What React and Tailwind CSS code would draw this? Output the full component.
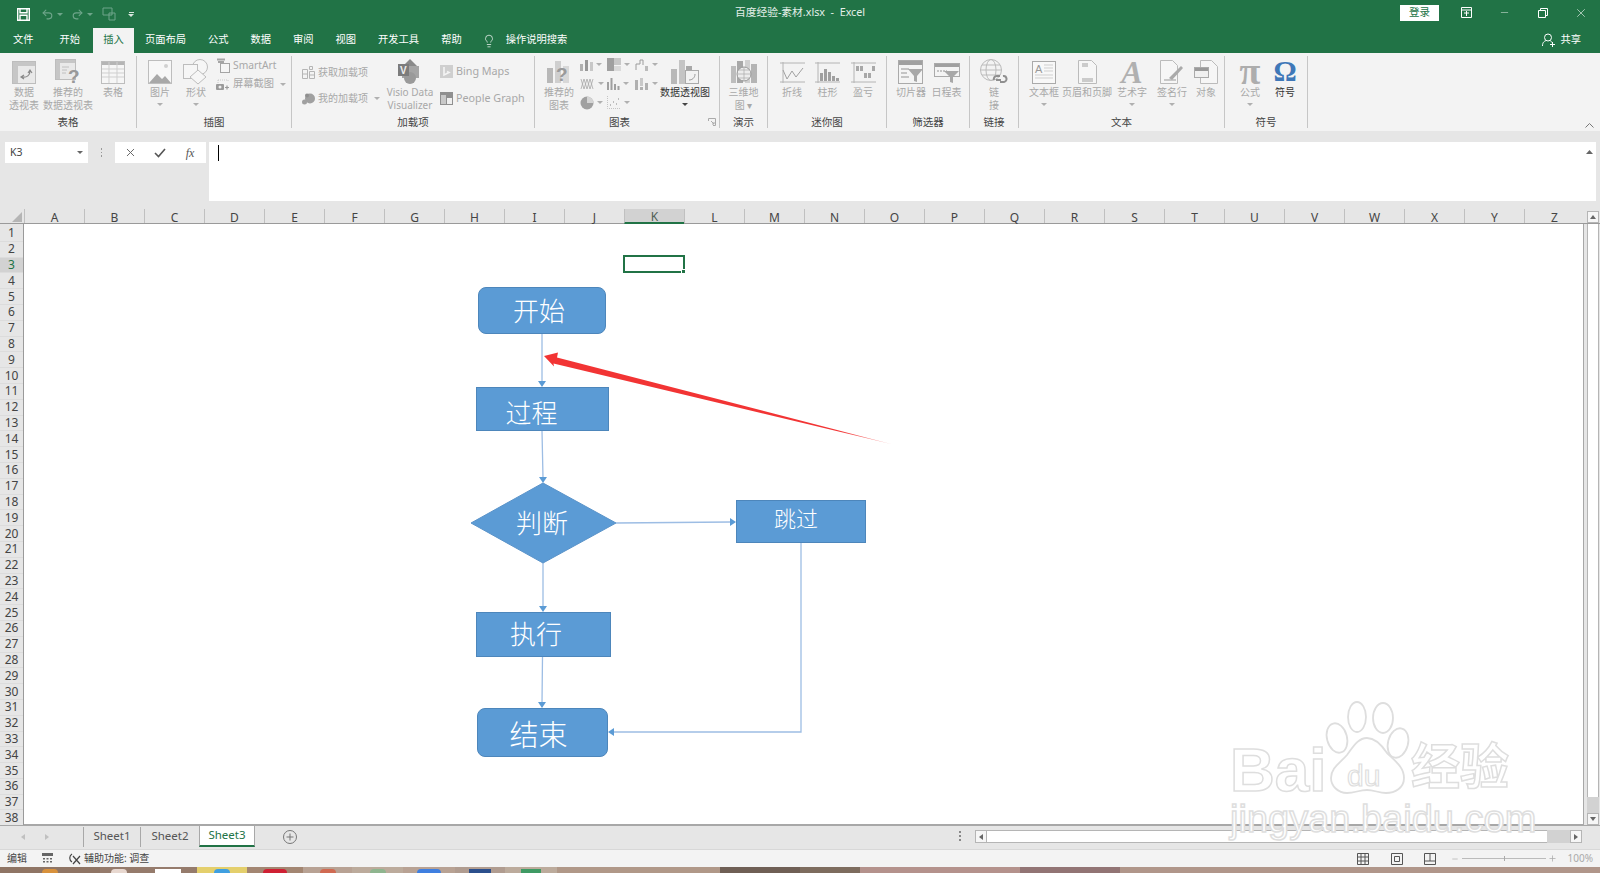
import React from "react";
import { Lightbulb, Minus, Plus, Redo2, Undo2, X } from "lucide-react";

const tabs = ["页面布局", "公式", "数据", "审阅", "视图", "开发工具", "帮助"];
const cols = "ABCDEFGHIJKLMNOPQRSTUVWXYZ".split("");
const rows = Array.from({ length: 38 }, (_, i) => i + 1);

const Caret = ({ color = "border-t-[#b0b0b0]" }) => (
  <span className={`inline-block w-0 h-0 border-x-[3px] border-x-transparent border-t-[3px] ${color}`} />
);

function LargeBtn({ w, icon, lines, caret, dark }) {
  return (
    <div className={`flex flex-col items-center shrink-0 ${w}`}>
      <div className="h-[28px] flex items-center justify-center">{icon}</div>
      <div className={`flex flex-col items-center text-[10px] leading-[12.500px] whitespace-nowrap ${dark ? "text-[#333]" : "text-[#a8a8a8]"}`}>
        {lines.map((l) => (
          <span key={l}>{l}</span>
        ))}
        {caret && (
          <span className="h-[12px] flex items-center">
            <Caret color={dark ? "border-t-[#444]" : "border-t-[#b0b0b0]"} />
          </span>
        )}
      </div>
    </div>
  );
}

function Group({ w, label, children, className = "", labelClass = "" }) {
  return (
    <div className={`relative shrink-0 my-[3px] flex flex-col border-r border-[#c6c6c6] ${w}`}>
      <div className={`flex-1 pt-[2px] flex ${className}`}>{children}</div>
      <div className={`h-[13px] pt-[2px] flex items-center justify-center text-[10.5px] text-[#444] ${labelClass}`}>{label}</div>
    </div>
  );
}

function SmallRow({ icon, text, caret, className = "" }) {
  return (
    <div className={`flex items-center gap-[3px] text-[#a8a8a8] whitespace-nowrap ${className}`}>
      {icon}
      <span>{text}</span>
      {caret && <span className="ml-[3px] flex"><Caret /></span>}
    </div>
  );
}

const g = "#bdbdbd";
const lg = "#e9e9e9";

const PivotIcon = () => (
  <svg width="24" height="23" viewBox="0 0 24 23">
    <rect x=".5" y=".5" width="23" height="22" fill={lg} stroke={g} />
    <rect x="1" y="1" width="22" height="4" fill="#c6c6c6" />
    <rect x="1" y="1" width="5" height="21" fill="#c6c6c6" />
    <path d="M10 16c5 1 8-2 8-6M16 12l2-3 2 3M12 14l-3 2 3 2" fill="none" stroke="#888" strokeWidth="1.2" />
  </svg>
);
const RecPivotIcon = () => (
  <svg width="26" height="27" viewBox="0 0 26 27">
    <rect x=".5" y=".5" width="20" height="20" fill={lg} stroke={g} />
    <rect x="1" y="1" width="19" height="3" fill="#c6c6c6" />
    <rect x="1" y="1" width="4" height="19" fill="#c6c6c6" />
    <path d="M7 8h7M7 11h5M7 14h4" stroke="#c0c0c0" />
    <text x="13" y="24" fontSize="19" fontWeight="700" fill="#999" fontFamily="Liberation Sans">?</text>
  </svg>
);
const TableIcon = () => (
  <svg width="24" height="23" viewBox="0 0 24 23">
    <rect x=".5" y=".5" width="23" height="22" fill="#f6f6f6" stroke={g} />
    <rect x="1" y="1" width="22" height="3" fill="#b5b5b5" />
    <path d="M1 8h22M1 12h22M1 16h22M8 1v21M16 1v21" stroke="#cfcfcf" />
  </svg>
);
const PictureIcon = () => (
  <svg width="24" height="24" viewBox="0 0 24 24">
    <rect x=".5" y=".5" width="23" height="23" fill="#f7f7f7" stroke={g} />
    <circle cx="18" cy="6" r="2" fill="#d0d0d0" />
    <path d="M1 23l8-9 5 5 3-3 6 7z" fill="#a8a8a8" />
  </svg>
);
const ShapesIcon = () => (
  <svg width="26" height="26" viewBox="0 0 26 26" fill="#f6f6f6" stroke={g}>
    <circle cx="17" cy="8" r="7.5" />
    <rect x=".5" y="5.5" width="14" height="14" />
    <path d="M15 11l8 7-8 7-8-7z" />
  </svg>
);
const SmartArtIcon = () => (
  <svg width="14" height="15" viewBox="0 0 14 15" fill="none" stroke="#a5a5a5">
    <rect x="4.5" y="5.5" width="9" height="9" fill="#f6f6f6" />
    <path d="M1 1.5h8M2 4h6" strokeWidth="2" />
  </svg>
);
const ScreenshotIcon = () => (
  <svg width="14" height="14" viewBox="0 0 14 14">
    <path d="M2 3h10M2 3v3M12 3v2" stroke="#c8c8c8" strokeDasharray="1 1" fill="none" />
    <rect x="0" y="7" width="8" height="6" rx="1" fill="#9a9a9a" />
    <circle cx="4" cy="10" r="1.5" fill="#eee" />
    <path d="M9 10.5h4M11 8.5v4" stroke="#9a9a9a" strokeWidth="1.2" />
  </svg>
);
const GetAddinIcon = () => (
  <svg width="13" height="13" viewBox="0 0 13 13" fill="none" stroke="#b5b5b5">
    <path d="M.5 3.5h5v9h-5zM.5 8h5M7.5 5.5h5v7h-5zM7.5 9h5M7.5 .5h3v3h-3z" />
  </svg>
);
const MyAddinIcon = () => (
  <svg width="13" height="12" viewBox="0 0 13 12" fill="#a0a0a0">
    <circle cx="8" cy="5.5" r="5" />
    <circle cx="2.5" cy="9" r="2.5" />
    <circle cx="5" cy="2.5" r="2" fill="#8f8f8f" />
  </svg>
);
const VisioIcon = () => (
  <svg width="26" height="26" viewBox="0 0 26 26">
    <path d="M13 0l8 8H5z" fill="#8a8a8a" />
    <rect x="5" y="7" width="17" height="12" fill="#a5a5a5" />
    <circle cx="13" cy="19" r="6" fill="#9a9a9a" />
    <rect x="1" y="5" width="11" height="12" fill="#7c7c7c" />
    <text x="3" y="15" fontSize="10" fontWeight="700" fill="#eee" fontFamily="Liberation Sans">V</text>
  </svg>
);
const BingIcon = () => (
  <svg width="13" height="13" viewBox="0 0 13 13">
    <rect width="13" height="13" fill="#cfcfcf" />
    <path d="M4 2v8l5-2.5-2-1" fill="none" stroke="#f4f4f4" strokeWidth="1.6" />
  </svg>
);
const PeopleIcon = () => (
  <svg width="13" height="13" viewBox="0 0 13 13">
    <rect width="13" height="13" fill="#8f8f8f" />
    <rect x="1" y="3" width="5" height="9" fill="#c8c8c8" />
    <rect x="7" y="6" width="5" height="6" fill="#eee" />
  </svg>
);
const RecChartIcon = () => (
  <svg width="24" height="24" viewBox="0 0 24 24">
    <rect x="0" y="8" width="6" height="15" fill="#b8b8b8" />
    <rect x="8" y="1" width="6" height="22" fill="#cfcfcf" />
    <rect x="16" y="6" width="6" height="17" fill="#d8d8d8" />
    <text x="9" y="21" fontSize="19" fontWeight="700" fill="#9a9a9a" fontFamily="Liberation Sans">?</text>
  </svg>
);
const MiniBars = () => (
  <svg width="13" height="12" viewBox="0 0 13 12" fill="#b0b0b0">
    <rect x="0" y="5" width="3" height="7" />
    <rect x="5" y="1" width="3" height="11" fill="#989898" />
    <rect x="10" y="3" width="3" height="9" fill="#c8c8c8" />
  </svg>
);
const MiniTree = () => (
  <svg width="14" height="13" viewBox="0 0 14 13">
    <rect width="7" height="13" fill="#a0a0a0" />
    <rect x="7" width="7" height="7" fill="#c8c8c8" />
    <rect x="7" y="8" width="7" height="5" fill="#dadada" />
  </svg>
);
const MiniStep = () => (
  <svg width="14" height="12" viewBox="0 0 14 12" fill="none" stroke="#9c9c9c">
    <path d="M1 11V5h4V1h3v5" />
    <rect x="10" y="7" width="3" height="5" fill="#bbb" stroke="none" />
  </svg>
);
const MiniWave = () => (
  <svg width="15" height="13" viewBox="0 0 15 13" fill="none" stroke="#a8a8a8">
    <path d="M1 12l3-10 3 10 3-10 3 10M1 2l3 10 3-10 3 10 3-10" strokeWidth=".8" />
  </svg>
);
const MiniHist = () => (
  <svg width="13" height="12" viewBox="0 0 13 12" fill="#a0a0a0">
    <rect x="0" y="4" width="2" height="8" />
    <rect x="3.5" y="0" width="2" height="12" />
    <rect x="7" y="6" width="2" height="6" />
    <rect x="10.5" y="8" width="2" height="4" />
  </svg>
);
const MiniBox = () => (
  <svg width="14" height="12" viewBox="0 0 14 12" fill="#b0b0b0">
    <rect x="0" y="2" width="3" height="10" />
    <rect x="5" y="0" width="3" height="8" fill="#c8c8c8" />
    <rect x="5" y="9" width="3" height="3" />
    <rect x="10" y="5" width="3" height="7" />
  </svg>
);
const MiniPie = () => (
  <svg width="14" height="14" viewBox="0 0 14 14">
    <circle cx="7" cy="7" r="6.5" fill="#a0a0a0" />
    <path d="M7 7V.5A6.5 6.5 0 0 1 13.5 7z" fill="#d4d4d4" />
  </svg>
);
const MiniScatter = () => (
  <svg width="14" height="13" viewBox="0 0 14 13" fill="none">
    <path d="M.5 0v12.5H14" stroke="#c4c4c4" strokeDasharray="1 1" />
    <path d="M3 9h1M6 6h1M9 8h1M11 3h1" stroke="#aaa" strokeWidth="1.5" />
  </svg>
);
const PivotChartIcon = () => (
  <svg width="28" height="25" viewBox="0 0 28 25">
    <rect x="0" y="9" width="6" height="15" fill="#b8b8b8" />
    <rect x="8" y="0" width="6" height="24" fill="#c4c4c4" />
    <rect x="15" y="6" width="6" height="18" fill="#a8a8a8" />
    <rect x="14.5" y="10.5" width="13" height="13" fill="#f2f2f2" stroke="#aaa" />
    <path d="M18 20c3 0 6-2 6-6" stroke="#999" fill="none" />
  </svg>
);
const MapIcon = () => (
  <svg width="26" height="24" viewBox="0 0 26 24">
    <rect x="0" y="6" width="5" height="17" fill="#bdbdbd" />
    <rect x="6" y="1" width="6" height="22" fill="#a8a8a8" />
    <rect x="14" y="0" width="5" height="23" fill="#d0d0d0" />
    <rect x="20" y="4" width="6" height="19" fill="#b4b4b4" />
    <circle cx="13" cy="14" r="7" fill="#ececec" stroke="#999" />
    <path d="M6 14h14M13 7v14M8 10h10M8 18h10" stroke="#aaa" strokeWidth=".7" />
  </svg>
);
const LineSpark = () => (
  <svg width="25" height="21" viewBox="0 0 25 21" fill="none">
    <path d="M0 1h25M0 20h25M3 0v21" stroke="#b4b4b4" />
    <path d="M3 8l4 9 5-8 4 6 7-9" stroke="#a0a0a0" />
  </svg>
);
const ColSpark = () => (
  <svg width="25" height="21" viewBox="0 0 25 21">
    <path d="M0 1h25M0 20h25M3 0v21" stroke="#b4b4b4" fill="none" />
    <rect x="5" y="11" width="3" height="8" fill="#a0a0a0" />
    <rect x="9" y="7" width="3" height="12" fill="#a0a0a0" />
    <rect x="13" y="10" width="3" height="9" fill="#a0a0a0" />
    <rect x="17" y="14" width="3" height="5" fill="#a0a0a0" />
    <rect x="21" y="16" width="3" height="3" fill="#a0a0a0" />
  </svg>
);
const WinSpark = () => (
  <svg width="25" height="21" viewBox="0 0 25 21">
    <path d="M0 1h25M0 20h25M3 0v21" stroke="#b4b4b4" fill="none" />
    <rect x="5" y="4" width="3" height="5" fill="#a8a8a8" />
    <rect x="9" y="4" width="3" height="5" fill="#a8a8a8" />
    <rect x="13" y="11" width="3" height="5" fill="#a8a8a8" />
    <rect x="17" y="11" width="3" height="5" fill="#a8a8a8" />
    <rect x="21" y="4" width="3" height="5" fill="#a8a8a8" />
  </svg>
);
const SlicerIcon = () => (
  <svg width="26" height="24" viewBox="0 0 26 24">
    <rect x=".5" y=".5" width="24" height="23" fill="#f4f4f4" stroke="#aaa" />
    <rect x="1" y="1" width="23" height="4" fill="#a0a0a0" />
    <path d="M3 9h8M3 13h6M3 17h8" stroke="#c4c4c4" strokeWidth="2" />
    <path d="M10 9h15l-6 7v6l-3-1v-5z" fill="#a8a8a8" />
  </svg>
);
const TimelineIcon = () => (
  <svg width="26" height="24" viewBox="0 0 26 24">
    <rect x=".5" y="3.5" width="25" height="13" fill="#f4f4f4" stroke="#aaa" />
    <rect x="1" y="4" width="24" height="3" fill="#a0a0a0" />
    <path d="M3 11h10" stroke="#c4c4c4" strokeWidth="2" strokeDasharray="2 1" />
    <path d="M10 11h15l-6 6v6l-3-1v-5z" fill="#a8a8a8" />
  </svg>
);
const LinkIcon = () => (
  <svg width="28" height="26" viewBox="0 0 28 26" fill="none">
    <circle cx="11" cy="11" r="10.5" stroke="#bbb" />
    <ellipse cx="11" cy="11" rx="5" ry="10.5" stroke="#bbb" />
    <path d="M.5 11h21M2 6h18M2 16h18" stroke="#bbb" />
    <path d="M14 21a3 3 0 0 1 3-4h3M23 17a3 3 0 0 1 1 6h-4M16 21h5" stroke="#8f8f8f" strokeWidth="2" />
  </svg>
);
const TextBoxIcon = () => (
  <svg width="24" height="23" viewBox="0 0 24 23">
    <rect x=".5" y=".5" width="23" height="22" fill="#f8f8f8" stroke="#aaa" />
    <text x="3" y="12" fontSize="11" fill="#999" fontFamily="Liberation Sans">A</text>
    <path d="M12 4h9M12 7h9M12 10h9M3 14h18M3 17h18" stroke="#cfcfcf" />
  </svg>
);
const HeaderIcon = () => (
  <svg width="19" height="24" viewBox="0 0 19 24">
    <path d="M.5.5h13l5 5v18H.5z" fill="#f6f6f6" stroke="#bbb" />
    <path d="M4 4h6M4 6h6M4 19h11M4 21h11" stroke="#bdbdbd" strokeWidth="1.5" />
  </svg>
);
const WordArtIcon = () => (
  <span className="inline-block h-[26px] font-['Liberation_Serif',serif] italic font-bold text-[32px] leading-[26px] text-[#b0b0b0]">A</span>
);
const SignatureIcon = () => (
  <svg width="24" height="24" viewBox="0 0 24 24">
    <path d="M.5.5h12l5 5v18H.5z" fill="#f6f6f6" stroke="#bbb" />
    <path d="M4 20h12" stroke="#999" />
    <path d="M9 18l12-12 2 2-11 12z" fill="#aaa" />
  </svg>
);
const ObjectIcon = () => (
  <svg width="24" height="24" viewBox="0 0 24 24">
    <path d="M6.5.5h11l6 6v17h-17z" fill="#f6f6f6" stroke="#bbb" />
    <rect x=".5" y="7.5" width="14" height="10" fill="#f0f0f0" stroke="#aaa" />
    <rect x="1" y="8" width="13" height="3" fill="#999" />
  </svg>
);
const Glyph = ({ children, className }) => (
  <span className={`inline-block h-[26px] leading-[24px] font-['Liberation_Serif',serif] font-bold ${className}`}>{children}</span>
);

function Chip({ w, bg, color, chip = "w-[16px] rounded-t-full" }) {
  return (
    <div className={`shrink-0 h-full flex items-end justify-center ${w} ${bg}`}>
      {color && <div className={`h-[4px] ${chip} ${color}`} />}
    </div>
  );
}

function Arrow({ points }) {
  return <polygon points={points} fill="#5b9bd5" />;
}

export default function App() {
  return (
    <div className="relative w-[1600px] h-[873px] overflow-hidden flex flex-col bg-[#e6e6e6] font-['Noto_Sans','Noto_Sans_CJK_SC',sans-serif]">
      {/* title bar */}
      <div className="h-[28px] bg-[#217346] grid grid-cols-[1fr_auto_1fr] items-center text-white shrink-0">
        <div className="flex items-center pl-[17px]">
          <svg width="13" height="13" viewBox="0 0 13 13" fill="none" stroke="#fff" strokeWidth="1.4">
            <path d="M.7.7h11.6v11.6H.7zM3 .7v4h7v-4M3 12.300v-5h7v5" />
          </svg>
          <Undo2 size={13} className="ml-[11px] text-[#6ea58a]" />
          <span className="ml-[3px] flex"><Caret color="border-t-[#6ea58a]" /></span>
          <Redo2 size={13} className="ml-[8px] text-[#6ea58a]" />
          <span className="ml-[3px] flex"><Caret color="border-t-[#6ea58a]" /></span>
          <svg className="ml-[9px]" width="14" height="14" viewBox="0 0 14 14" fill="none" stroke="#6ea58a">
            <path d="M1 1h9v7H1zM7 6h6v7H7z" />
          </svg>
          <div className="ml-[12px] flex flex-col items-center gap-[1px]">
            <span className="w-[5px] h-[1px] bg-[#d8e6de]" />
            <Caret color="border-t-[#d8e6de]" />
          </div>
        </div>
        <div className="text-[10.75px] whitespace-pre text-[#e4efe9] pb-[4px]">百度经验-素材.xlsx  -  Excel</div>
        <div className="flex items-center justify-end h-full pb-[3px]">
          <div className="w-[39px] h-[16px] mr-[8px] bg-white text-[#217346] text-[10.5px] flex items-center justify-center">登录</div>
          <div className="w-[38px] flex justify-center">
            <svg width="11" height="11" viewBox="0 0 11 11" fill="none" stroke="#fff">
              <path d="M.5.5h10v10H.5zM.5 3h10M3 6h5M5.500 4v5" />
            </svg>
          </div>
          <div className="w-[39px] flex justify-center"><Minus size={11} strokeWidth={1} /></div>
          <div className="w-[38px] flex justify-center">
            <svg width="10" height="10" viewBox="0 0 10 10" fill="none" stroke="#fff">
              <path d="M.5 2.500h7v7h-7zM2.500 2.500v-2h7v7h-2" />
            </svg>
          </div>
          <div className="w-[38px] flex justify-center"><X size={14} strokeWidth={1} /></div>
        </div>
      </div>

      {/* tabs */}
      <div className="h-[25px] bg-[#217346] flex items-center text-white text-[10.25px] shrink-0">
        <div className="px-[13px] h-full flex items-center pb-[2px]">文件</div>
        <div className="px-[13px] h-full flex items-center pb-[2px]">开始</div>
        <div className="w-[41px] h-full bg-[#f3f3f3] text-[#217346] flex items-center justify-center pb-[2px]">插入</div>
        {tabs.map((t) => (
          <div key={t} className="px-[11px] h-full flex items-center pb-[2px]">{t}</div>
        ))}
        <Lightbulb size={14} strokeWidth={1.2} className="ml-[9px]" />
        <div className="ml-[10px] pb-[2px]">操作说明搜索</div>
        <div className="flex-1" />
        <svg className="mb-[2px]" width="14" height="14" viewBox="0 0 14 14" fill="none" stroke="#fff">
          <circle cx="6" cy="4.500" r="3.500" />
          <path d="M.5 13c0-4 2-5 4-5.500M7.500 7.500c1 .3 2 .8 2.500 2M8 11.500h5M10.500 9v5" />
        </svg>
        <div className="ml-[4px] mr-[19px] pb-[2px]">共享</div>
      </div>

      {/* ribbon */}
      <div className="relative h-[78px] bg-[#f3f3f3] flex shrink-0">
        <Group w="w-[137px]" label="表格" className="pl-[2px]">
          <LargeBtn w="w-[44px]" icon={<PivotIcon />} lines={["数据", "透视表"]} />
          <LargeBtn w="w-[44px]" icon={<RecPivotIcon />} lines={["推荐的", "数据透视表"]} />
          <LargeBtn w="w-[46px]" icon={<TableIcon />} lines={["表格"]} />
        </Group>
        <Group w="w-[155px]" label="插图" className="pl-[5px]">
          <LargeBtn w="w-[36px]" icon={<PictureIcon />} lines={["图片"]} caret />
          <LargeBtn w="w-[36px]" icon={<ShapesIcon />} lines={["形状"]} caret />
          <div className="ml-[2px] flex flex-col gap-[3px] text-[10.25px]">
            <SmallRow icon={<SmartArtIcon />} text="SmartArt" />
            <SmallRow icon={<ScreenshotIcon />} text="屏幕截图" caret />
          </div>
        </Group>
        <Group w="w-[243px]" label="加载项" className="pl-[10px]">
          <div className="w-[83px] pt-[7px] flex flex-col gap-[11px] text-[10px]">
            <SmallRow icon={<GetAddinIcon />} text="获取加载项" />
            <SmallRow icon={<MyAddinIcon />} text="我的加载项" caret />
          </div>
          <LargeBtn w="w-[50px]" icon={<VisioIcon />} lines={["Visio Data", "Visualizer"]} />
          <div className="pl-[5px] pt-[6px] flex flex-col gap-[13px] text-[10.75px] leading-[14px]">
            <SmallRow icon={<BingIcon />} text="Bing Maps" />
            <SmallRow icon={<PeopleIcon />} text="People Graph" />
          </div>
        </Group>
        <Group w="w-[185px]" label="图表" className="pl-[4px]" labelClass="pr-[15px]">
          <LargeBtn w="w-[40px]" icon={<RecChartIcon />} lines={["推荐的", "图表"]} />
          <div className="ml-[1px] w-[81px] shrink-0 grid grid-cols-[27px_28px_26px] gap-y-[6px] content-start">
            {[
              <MiniBars key="a" />, <MiniTree key="b" />, <MiniStep key="c" />,
              <MiniWave key="d" />, <MiniHist key="e" />, <MiniBox key="f" />,
              <MiniPie key="g" />, <MiniScatter key="h" />,
            ].map((ic) => (
              <div key={ic.key} className="flex items-center gap-[3px] h-[13px]">
                {ic}
                <Caret />
              </div>
            ))}
          </div>
          <LargeBtn w="w-[48px]" icon={<PivotChartIcon />} lines={["数据透视图"]} caret dark />
          <svg className="absolute right-[3px] bottom-[2px]" width="8" height="8" viewBox="0 0 8 8" fill="none" stroke="#aaa">
            <path d="M.5 3V.5H7.500V7.500H5M3 3l3 3M6 4v2H4" />
          </svg>
        </Group>
        <Group w="w-[48px]" label="演示">
          <LargeBtn w="w-[47px]" icon={<MapIcon />} lines={["三维地", "图 ▾"]} />
        </Group>
        <Group w="w-[119px]" label="迷你图" className="pl-[6px]">
          <LargeBtn w="w-[36px]" icon={<LineSpark />} lines={["折线"]} />
          <LargeBtn w="w-[35px]" icon={<ColSpark />} lines={["柱形"]} />
          <LargeBtn w="w-[36px]" icon={<WinSpark />} lines={["盈亏"]} />
        </Group>
        <Group w="w-[83px]" label="筛选器" className="pl-[6px]">
          <LargeBtn w="w-[36px]" icon={<SlicerIcon />} lines={["切片器"]} />
          <LargeBtn w="w-[35px]" icon={<TimelineIcon />} lines={["日程表"]} />
        </Group>
        <Group w="w-[49px]" label="链接">
          <LargeBtn w="w-[48px]" icon={<LinkIcon />} lines={["链", "接"]} />
        </Group>
        <Group w="w-[206px]" label="文本" className="pl-[5px]">
          <LargeBtn w="w-[40px]" icon={<TextBoxIcon />} lines={["文本框"]} caret />
          <LargeBtn w="w-[46px]" icon={<HeaderIcon />} lines={["页眉和页脚"]} />
          <LargeBtn w="w-[44px]" icon={<WordArtIcon />} lines={["艺术字"]} caret />
          <LargeBtn w="w-[36px]" icon={<SignatureIcon />} lines={["签名行"]} caret />
          <LargeBtn w="w-[32px]" icon={<ObjectIcon />} lines={["对象"]} />
        </Group>
        <Group w="w-[83px]" label="符号" className="pl-[8px]">
          <LargeBtn w="w-[34px]" icon={<Glyph className="text-[38px] text-[#adadad]">π</Glyph>} lines={["公式"]} caret />
          <LargeBtn w="w-[36px]" icon={<Glyph className="text-[29px] text-[#3f78b8]">Ω</Glyph>} lines={["符号"]} dark />
        </Group>
        <svg className="absolute right-[6px] bottom-[3px]" width="9" height="5" viewBox="0 0 9 5" fill="none" stroke="#777">
          <path d="M.5 4.500l4-4 4 4" />
        </svg>
      </div>

      {/* formula bar */}
      <div className="h-[78px] shrink-0 bg-[#e6e6e6] flex items-start pt-[11px] pl-[5px] pr-[4px] text-[#444]">
        <div className="w-[83px] h-[21px] bg-white flex items-center justify-between pl-[5px] pr-[5px] text-[10.5px]">
          <span>K3</span>
          <Caret color="border-t-[#666]" />
        </div>
        <div className="w-[27px] h-[21px] flex flex-col items-center justify-center gap-[2px]">
          <span className="w-[1.5px] h-[1.5px] bg-[#999]" />
          <span className="w-[1.5px] h-[1.5px] bg-[#999]" />
          <span className="w-[1.5px] h-[1.5px] bg-[#999]" />
        </div>
        <div className="w-[91px] h-[21px] bg-white flex items-center">
          <div className="w-[30px] flex justify-center"><X size={13} strokeWidth={1.8} className="text-[#666]" /></div>
          <div className="w-[30px] flex justify-center">
            <svg width="12" height="10" viewBox="0 0 12 10" fill="none" stroke="#555" strokeWidth="1.6">
              <path d="M1 5l3.500 3.500L11 1" />
            </svg>
          </div>
          <div className="w-[30px] flex justify-center font-['Liberation_Serif',serif] italic text-[12px] text-[#555]">fx</div>
        </div>
        <div className="relative ml-[3px] flex-1 h-[59px] bg-white">
          <div className="absolute left-[9px] top-[3px] w-[1px] h-[16px] bg-black" />
          <svg className="absolute right-[3px] top-[8px]" width="7" height="4" viewBox="0 0 7 4" fill="#666">
            <path d="M3.500 0L7 4H0z" />
          </svg>
        </div>
      </div>

      {/* column headers */}
      <div className="h-[15px] shrink-0 flex text-[12px] leading-[14px] text-[#444] border-b border-[#9a9a9a]">
        <div className="w-[24px] shrink-0 flex items-end justify-end pr-[2px] pb-[1px]">
          <div className="w-0 h-0 border-l-[10px] border-l-transparent border-b-[10px] border-b-[#b5b5b5]" />
        </div>
        {cols.map((c) => (
          <div
            key={c}
            className={`w-[60px] shrink-0 flex items-center justify-center pt-[3px] border-l border-[#c0c0c0] ${
              c === "K" ? "bg-[#d2d2d2] border-b-2 border-b-[#217346] text-[#4f5f56] h-[15px]" : ""
            }`}
          >
            {c}
          </div>
        ))}
        <div className="flex-1 flex justify-center pl-[2px]">
          <div className="w-[12px] h-[12px] mt-[2px] bg-[#f6f6f6] border border-[#b5b5b5] flex items-center justify-center">
            <svg width="6" height="4" viewBox="0 0 6 4" fill="#666"><path d="M3 0l3 4H0z" /></svg>
          </div>
        </div>
      </div>

      {/* grid */}
      <div className="h-[601px] shrink-0 flex">
        <div className="w-[24px] shrink-0 border-r border-[#9a9a9a] pt-[2px] overflow-hidden">
          {rows.map((r) => (
            <div
              key={r}
              className={`h-[15.800px] flex items-center justify-center text-[12px] text-[#444] border-b border-[#dcdcdc] ${
                r === 3 ? "bg-[#d2d2d2] text-[#217346]" : ""
              }`}
            >
              {r}
            </div>
          ))}
        </div>
        <div className="relative w-[1560px] shrink-0 bg-white border-r border-[#a8a8a8] border-b">
          <svg className="absolute left-0 top-0" width="1560" height="601" viewBox="24 224 1560 601" fill="none">
            <g stroke="#9dbde4" strokeWidth="1.300">
              <path d="M542 334V382M542 431L543 478M543 563V607M542.500 657L542 703M616 523L731 522M801 543V732H613" />
            </g>
            <Arrow points="538,381 546,381 542,387" />
            <Arrow points="539,477 547,477 543,483" />
            <Arrow points="539,606 547,606 543,612" />
            <Arrow points="538,702 546,702 542,708" />
            <Arrow points="730,518 736,522 730,526" />
            <Arrow points="614,728 608,732 614,736" />
            <polygon points="543,483 616,523 543,563 471,523" fill="#5b9bd5" stroke="#5a93c9" />
            <defs>
              <linearGradient id="red" x1="544" y1="356" x2="891" y2="444" gradientUnits="userSpaceOnUse">
                <stop offset="0" stopColor="#f23434" />
                <stop offset="0.85" stopColor="#f23434" />
                <stop offset="1" stopColor="#f7a0a0" />
              </linearGradient>
            </defs>
            <polygon points="544,356 558,352.500 557,357.500 891,444 553.500,363.500 554,366.500" fill="url(#red)" />
          </svg>

          <div className="absolute left-[599px] top-[31px] w-[62px] h-[18px] border-2 border-[#217346]">
            <div className="absolute -right-[3px] -bottom-[3px] w-[5px] h-[5px] bg-[#217346] border border-white" />
          </div>

          <div className="absolute left-[454px] top-[63px] w-[128px] h-[47px] rounded-[8px] bg-[#5b9bd5] border border-[#4d86bb] text-white text-[26px] font-light flex items-center justify-center pr-[6px] pt-[2px]">开始</div>
          <div className="absolute left-[452px] top-[163px] w-[133px] h-[44px] bg-[#5b9bd5] border border-[#4d86bb] text-white text-[26px] font-light flex items-center justify-center pr-[22px] pt-[8px]">过程</div>
          <div className="absolute left-[483px] top-[279px] w-[70px] h-[40px] text-white text-[26px] font-light flex items-center justify-center">判断</div>
          <div className="absolute left-[712px] top-[276px] w-[130px] h-[43px] bg-[#5b9bd5] border border-[#4d86bb] text-white text-[22px] font-light flex items-center justify-center pr-[10px] pb-[7px]">跳过</div>
          <div className="absolute left-[452px] top-[388px] w-[135px] h-[45px] bg-[#5b9bd5] border border-[#4d86bb] text-white text-[26px] font-light flex items-center justify-center pr-[15px] pb-[1px]">执行</div>
          <div className="absolute left-[453px] top-[484px] w-[131px] h-[49px] rounded-[8px] bg-[#5b9bd5] border border-[#4d86bb] text-white text-[29px] font-light flex items-center justify-center pr-[8px] pt-[5px]">结束</div>
        </div>
        <div className="flex-1 flex flex-col items-center pl-[2px]">
          <div className="flex-1 w-[12px] bg-white border-x border-[#b5b5b5]" />
          <div className="h-[16px] w-[12px] bg-[#d2d2d2]" />
          <div className="w-[12px] h-[12px] bg-[#f6f6f6] border border-[#b5b5b5] flex items-center justify-center">
            <svg width="6" height="4" viewBox="0 0 6 4" fill="#666"><path d="M3 4l3-4H0z" /></svg>
          </div>
        </div>
      </div>

      {/* sheet tabs */}
      <div className="h-[24px] shrink-0 flex items-start bg-[#e6e6e6] border-t border-[#a8a8a8] text-[11.5px] text-[#555]">
        <div className="w-[84px] h-[20px] flex items-center border-r border-[#a8a8a8] mt-[1px] text-[#b5b5b5]">
          <span className="ml-[21px] w-0 h-0 border-y-[3px] border-y-transparent border-r-[4px] border-r-[#c0c0c0]" />
          <span className="ml-[20px] w-0 h-0 border-y-[3px] border-y-transparent border-l-[4px] border-l-[#c0c0c0]" />
        </div>
        <div className="w-[57px] h-[20px] mt-[1px] pb-[3px] flex items-center justify-center border-r border-[#a8a8a8]">Sheet1</div>
        <div className="w-[58px] h-[20px] mt-[1px] pb-[3px] flex items-center justify-center">Sheet2</div>
        <div className="w-[56px] h-[21px] bg-white border-x border-[#a8a8a8] border-b-2 border-b-[#217346] text-[#217346] pb-[2px] flex items-center justify-center">Sheet3</div>
        <svg className="ml-[28px] mt-[4px]" width="14" height="14" viewBox="0 0 14 14" fill="none" stroke="#777">
          <circle cx="7" cy="7" r="6.500" />
          <path d="M7 3.500v7M3.500 7h7" />
        </svg>
        <div className="ml-[657px] mt-[5px] flex flex-col gap-[2px] w-[12px] items-center">
          <span className="w-[2px] h-[2px] bg-[#888]" />
          <span className="w-[2px] h-[2px] bg-[#888]" />
          <span className="w-[2px] h-[2px] bg-[#888]" />
        </div>
        <div className="ml-[9px] mt-[4px] flex items-center h-[13px]">
          <div className="w-[12px] h-[13px] bg-[#f6f6f6] border border-[#b5b5b5] flex items-center justify-center">
            <span className="w-0 h-0 border-y-[3px] border-y-transparent border-r-[4px] border-r-[#666]" />
          </div>
          <div className="w-[560px] h-[13px] bg-white border-y border-[#b5b5b5]" />
          <div className="w-[23px] h-[13px] bg-[#d2d2d2]" />
          <div className="w-[12px] h-[13px] bg-[#f6f6f6] border border-[#b5b5b5] flex items-center justify-center">
            <span className="w-0 h-0 border-y-[3px] border-y-transparent border-l-[4px] border-l-[#666]" />
          </div>
        </div>
      </div>

      {/* status bar */}
      <div className="h-[18px] shrink-0 flex items-center bg-[#f3f3f3] border-t border-[#d8d8d8] text-[10px] text-[#444] pl-[7px]">
        <span>编辑</span>
        <svg className="ml-[15px]" width="11" height="11" viewBox="0 0 11 11" fill="#666">
          <rect x="0" y="0" width="11" height="3" />
          <path d="M1 5h2v1.500H1zM4.500 5h2v1.500h-2zM8 5h2v1.500H8zM1 8h2v1.500H1zM4.500 8h2v1.500h-2zM8 8h2v1.500H8z" />
        </svg>
        <svg className="ml-[15px]" width="14" height="12" viewBox="0 0 14 12" fill="none" stroke="#444">
          <path d="M4 1C1 3 1 7 4 9M5 3l7 8M12 3l-7 8" strokeWidth="1.200" />
        </svg>
        <span className="ml-[2px]">辅助功能: 调查</span>
        <div className="flex-1" />
        <svg width="12" height="12" viewBox="0 0 12 12" fill="none" stroke="#555">
          <path d="M.5.5h11v11H.5zM.5 4h11M.5 8h11M4 .5v11M8 .5v11" />
        </svg>
        <svg className="ml-[22px]" width="12" height="12" viewBox="0 0 12 12" fill="none" stroke="#555">
          <path d="M.5.5h11v11H.5zM3.500 3.500h5v5h-5z" />
        </svg>
        <svg className="ml-[21px]" width="12" height="12" viewBox="0 0 12 12" fill="none" stroke="#555">
          <path d="M.5.5h11v11H.5zM.5 8h11M6 .5V8" />
        </svg>
        <Minus size={8} className="ml-[15px] text-[#aaa]" />
        <div className="relative ml-[3px] w-[84px] h-[1px] bg-[#bbb]">
          <div className="absolute left-[42px] -top-[2px] w-[1px] h-[5px] bg-[#aaa]" />
        </div>
        <Plus size={9} className="ml-[2px] text-[#aaa]" />
        <span className="ml-[11px] mr-[7px] text-[#aaa]">100%</span>
      </div>

      {/* taskbar strip */}
      <div className="flex-1 flex bg-[#b09a8c]">
        <Chip w="w-[100px]" bg="bg-[#8f7565]" color="bg-[#d8913c]" />
        <Chip w="w-[38px]" bg="bg-[#957b6c]" color="bg-[#e8d8d0]" />
        <Chip w="w-[59px]" bg="bg-[#957b6c]" color="bg-white" chip="w-[26px]" />
        <Chip w="w-[50px]" bg="bg-[#e4cf6c]" color="bg-[#3f9fe0]" />
        <Chip w="w-[56px]" bg="bg-[#a38672]" color="bg-[#cf2033]" chip="w-[24px] rounded-t-full" />
        <Chip w="w-[49px]" bg="bg-[#b8a294]" color="bg-[#d06a52]" />
        <Chip w="w-[51px]" bg="bg-[#bcab9c]" color="bg-[#8fb58f]" />
        <Chip w="w-[52px]" bg="bg-[#b8a294]" color="bg-[#3f7fe0]" chip="w-[24px] rounded-t-md" />
        <Chip w="w-[50px]" bg="bg-[#b09c90]" color="bg-[#2b4f8c]" chip="w-[22px]" />
        <Chip w="w-[52px]" bg="bg-[#bcab9c]" color="bg-[#3f9a64]" chip="w-[20px]" />
        <Chip w="w-[163px]" bg="bg-[#b09888]" />
        <Chip w="w-[80px]" bg="bg-[#6f5f55]" />
        <Chip w="w-[60px]" bg="bg-[#7d6c5e]" />
        <Chip w="w-[160px]" bg="bg-[#b4928c]" />
        <Chip w="w-[100px]" bg="bg-[#927474]" />
        <div className="flex-1 bg-[#b0968a]" />
      </div>

      {/* baidu watermark */}
      <div className="absolute inset-0 pointer-events-none font-['Liberation_Sans','Noto_Sans_CJK_SC',sans-serif]">
        <span className="absolute left-[1230px] top-[739px] font-bold text-[62px] leading-none text-white [-webkit-text-stroke:1.5px_#dedede]">Bai</span>
        <svg className="absolute left-[1320px] top-[700px]" width="95" height="96" viewBox="1320 700 95 96" fill="#fff" stroke="#dedede" strokeWidth="1.800">
          <ellipse cx="1337" cy="738" rx="10" ry="15" transform="rotate(-15 1337 738)" />
          <ellipse cx="1357" cy="717" rx="9" ry="15" />
          <ellipse cx="1383" cy="718" rx="10" ry="15" />
          <ellipse cx="1398" cy="743" rx="10" ry="15" transform="rotate(15 1398 743)" />
          <path d="M1367 738c8 0 14 6 20 15 8 8 17 14 17 25 0 10-9 15-18 15-7 0-12-3-19-3-8 0-12 3-20 3-9 0-16-7-16-15 0-10 9-15 16-23 6-8 11-17 20-17z" />
          <text x="1347" y="786" fontSize="30" fontFamily="Liberation Sans" fill="#fff" strokeWidth="1.200">du</text>
        </svg>
        <span className="absolute left-[1411px] top-[743px] font-bold text-[49px] leading-none text-white [-webkit-text-stroke:1.5px_#dedede]">经验</span>
        <span className="absolute left-[1230px] top-[800px] text-[38px] leading-none text-white [-webkit-text-stroke:1.5px_#dedede]">jingyan.baidu.com</span>
      </div>
    </div>
  );
}
